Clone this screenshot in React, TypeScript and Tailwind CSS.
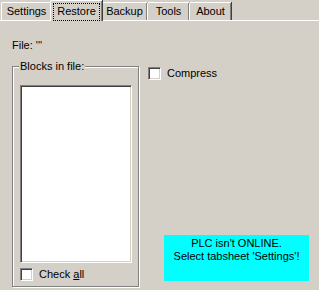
const tabs = [
  { label: 'Settings', width: 'w-[50px]' },
  { label: 'Restore', width: 'w-[52px]', active: true },
  { label: 'Backup', width: 'w-[46px]' },
  { label: 'Tools', width: 'w-[42px]' },
  { label: 'About', width: 'w-[42px]' },
]

function CheckBox() {
  return (
    <span className="block h-[13px] w-[13px] shrink-0 border border-[#808080] border-b-white border-r-white bg-white shadow-[inset_1px_1px_0_#404040,inset_-1px_-1px_0_#d4d0c8]" />
  )
}

export default function App() {
  return (
    <div className="h-[290px] w-[319px] overflow-hidden bg-[#d4d0c8] font-['Liberation_Sans',Arial,sans-serif] text-[11px] leading-[13px] text-black">
      {/* tab strip */}
      <div className="flex h-[21px] items-end border-b border-white pl-px">
        {tabs.map((tab) =>
          tab.active ? (
            <div
              key={tab.label}
              className={`${tab.width} relative z-10 -mx-px -mb-px flex h-[21px] items-start justify-center rounded-tl-[2px] border-l border-t border-white bg-[#d4d0c8] pt-[2px] shadow-[inset_-1px_0_#808080,1px_0_#404040]`}
            >
              <span className="border border-dotted border-black px-[3px] pb-[2px] pt-px">{tab.label}</span>
            </div>
          ) : (
            <div
              key={tab.label}
              className={`${tab.width} flex h-[18px] items-start justify-center rounded-tl-[2px] border-l border-t border-white pt-[2px] shadow-[inset_-1px_0_#808080,1px_0_#404040]`}
            >
              {tab.label}
            </div>
          )
        )}
      </div>

      <div className="px-[12px] pt-[18px]">
        <p>File: '''</p>

        <div className="mt-[14px] flex h-[221px]">
          {/* group box */}
          <div className="relative h-[221px] w-[127px] shrink-0 border border-[#808080] px-[7px] pt-[18px] shadow-[1px_1px_0_#fff,inset_1px_1px_0_#fff]">
            <span className="absolute -top-[7px] left-[6px] bg-[#d4d0c8] px-px">Blocks in file:</span>
            <div className="h-[178px] w-[112px] border border-[#808080] border-b-white border-r-white bg-white shadow-[inset_1px_1px_0_#404040,inset_-1px_-1px_0_#d4d0c8]" />
            <label className="mt-[5px] flex items-center gap-[6px]">
              <CheckBox />
              <span>
                Check <u>a</u>ll
              </span>
            </label>
          </div>

          {/* right column */}
          <div className="ml-[9px] flex flex-1 flex-col pb-[6px]">
            <label className="mt-px flex items-center gap-[6px]">
              <CheckBox />
              <span>Compress</span>
            </label>
            <div className="ml-[16px] mt-auto h-[46px] w-[145px] bg-[#00ffff] pt-[2px] text-center">
              <p>PLC isn't ONLINE.</p>
              <p>Select tabsheet 'Settings'!</p>
            </div>
          </div>
        </div>
      </div>
    </div>
  )
}
